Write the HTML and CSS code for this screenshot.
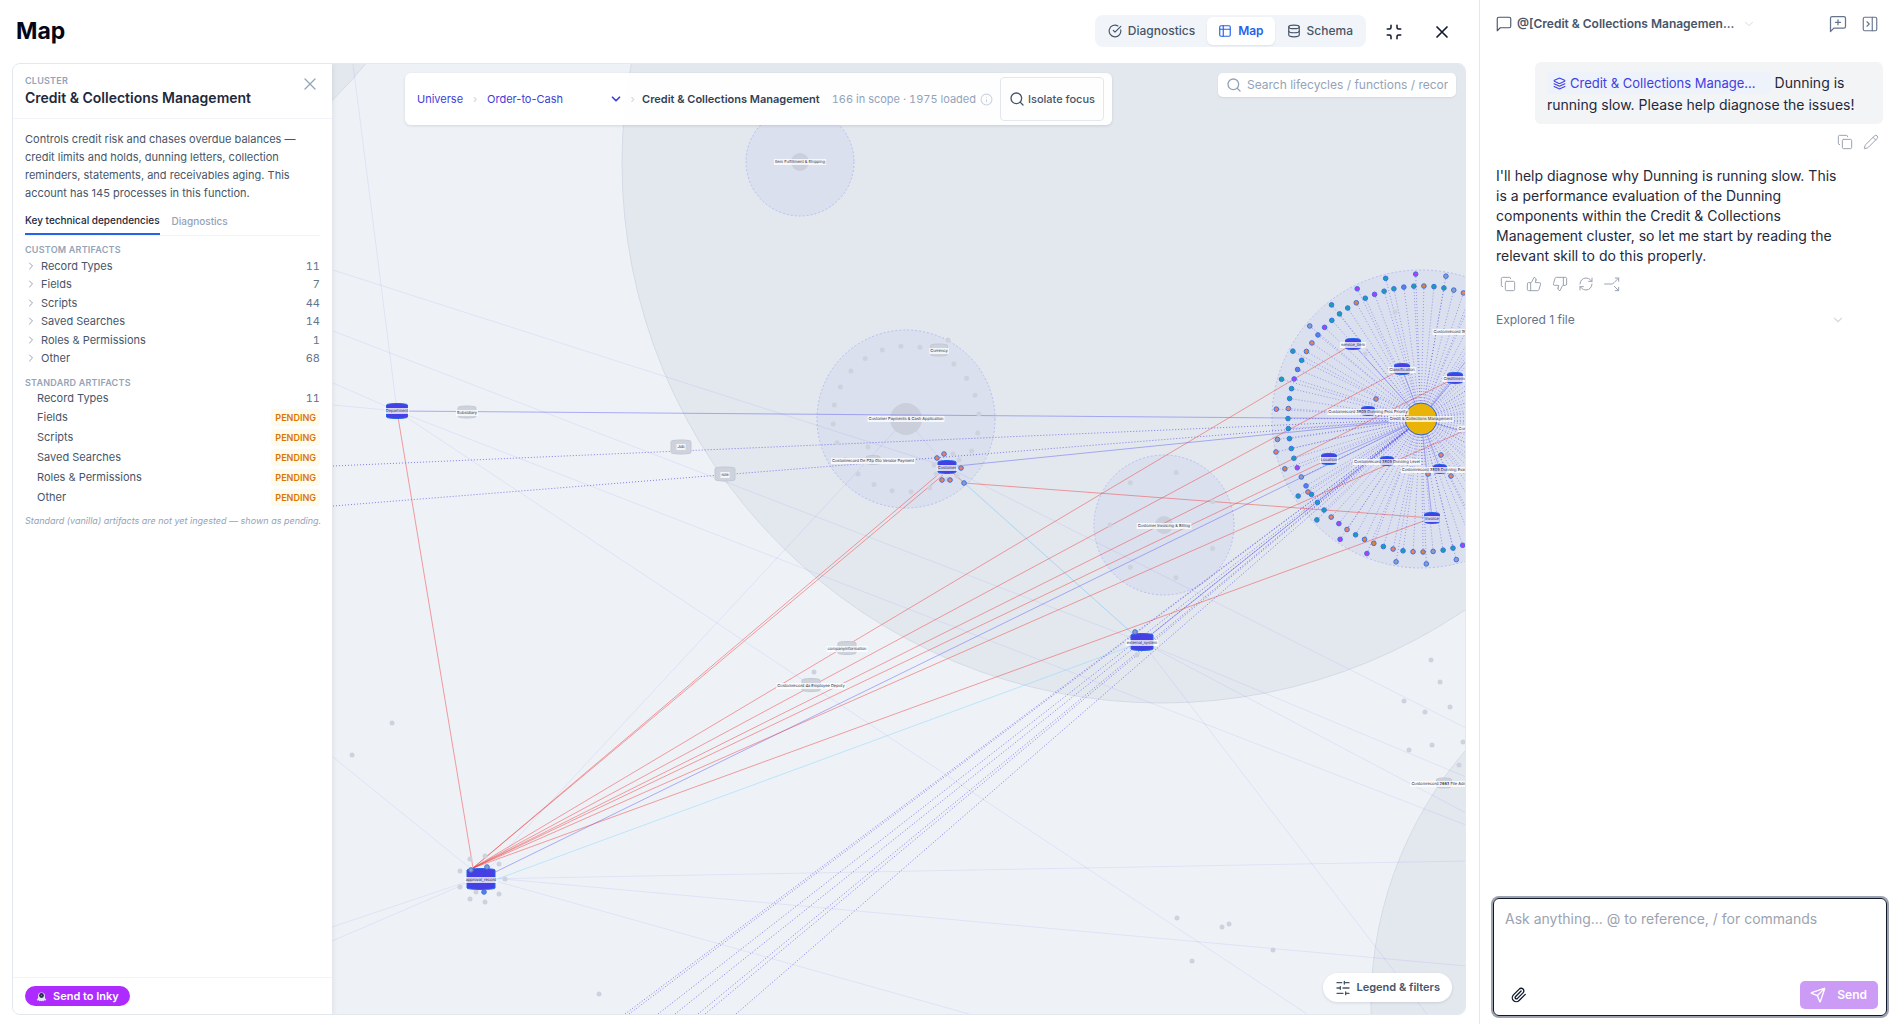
FILE: index.html
```html
<!DOCTYPE html>
<html lang="en">
<head>
<meta charset="utf-8">
<title>Map</title>
<link rel="stylesheet" href="styles.css">
</head>
<body>
<svg class="sprite" aria-hidden="true">
  <symbol id="i-check" viewBox="0 0 24 24"><path d="M21.8 10A10 10 0 1 1 17 3.3"/><path d="m9 11 3 3L22 4"/></symbol>
  <symbol id="i-table" viewBox="0 0 24 24"><rect x="3" y="3" width="18" height="18" rx="2"/><path d="M3 9h18M9 3v18"/></symbol>
  <symbol id="i-db" viewBox="0 0 24 24"><ellipse cx="12" cy="5" rx="9" ry="3"/><path d="M3 5v14a9 3 0 0 0 18 0V5"/><path d="M3 12a9 3 0 0 0 18 0"/></symbol>
  <symbol id="i-min" viewBox="0 0 24 24"><path d="M8 3v3a2 2 0 0 1-2 2H3M21 8h-3a2 2 0 0 1-2-2V3M3 16h3a2 2 0 0 1 2 2v3M16 21v-3a2 2 0 0 1 2-2h3"/></symbol>
  <symbol id="i-x" viewBox="0 0 24 24"><path d="M18 6 6 18M6 6l12 12"/></symbol>
  <symbol id="i-search" viewBox="0 0 24 24"><circle cx="11" cy="11" r="8"/><path d="m21 21-4.3-4.3"/></symbol>
  <symbol id="i-right" viewBox="0 0 24 24"><path d="m9 18 6-6-6-6"/></symbol>
  <symbol id="i-down" viewBox="0 0 24 24"><path d="m6 9 6 6 6-6"/></symbol>
  <symbol id="i-info" viewBox="0 0 24 24"><circle cx="12" cy="12" r="10"/><path d="M12 16v-4M12 8h.01"/></symbol>
  <symbol id="i-sliders" viewBox="0 0 24 24"><path d="M21 4h-7M10 4H3M21 12h-9M8 12H3M21 20h-5M12 20H3M14 2v4M8 10v4M16 18v4"/></symbol>
  <symbol id="i-msg" viewBox="0 0 24 24"><path d="M21 15a2 2 0 0 1-2 2H7l-4 4V5a2 2 0 0 1 2-2h14a2 2 0 0 1 2 2z"/></symbol>
  <symbol id="i-msgplus" viewBox="0 0 24 24"><path d="M21 15a2 2 0 0 1-2 2H7l-4 4V5a2 2 0 0 1 2-2h14a2 2 0 0 1 2 2z"/><path d="M12 7v6M9 10h6"/></symbol>
  <symbol id="i-panel" viewBox="0 0 24 24"><rect x="3" y="3" width="18" height="18" rx="2"/><path d="M15 3v18M8 9l3 3-3 3"/></symbol>
  <symbol id="i-layers" viewBox="0 0 24 24"><path d="m12.8 2.2a2 2 0 0 0-1.6 0L2.6 6.1a1 1 0 0 0 0 1.8l8.6 3.9a2 2 0 0 0 1.6 0l8.6-3.9a1 1 0 0 0 0-1.8Z"/><path d="m22 12.5-9.2 4.2a2 2 0 0 1-1.6 0L2 12.5"/><path d="m22 17.5-9.2 4.2a2 2 0 0 1-1.6 0L2 17.5"/></symbol>
  <symbol id="i-copy" viewBox="0 0 24 24"><rect x="8" y="8" width="14" height="14" rx="2"/><path d="M4 16a2 2 0 0 1-2-2V4a2 2 0 0 1 2-2h10a2 2 0 0 1 2 2"/></symbol>
  <symbol id="i-pencil" viewBox="0 0 24 24"><path d="M21.2 6.8a2.8 2.8 0 0 0-4-4L3.8 16.2a2 2 0 0 0-.5.8L2 21.4a.5.5 0 0 0 .6.6L7 20.7a2 2 0 0 0 .8-.5zM15 5l4 4"/></symbol>
  <symbol id="i-up" viewBox="0 0 24 24"><path d="M7 10v12M15 5.9 14 10h5.8a2 2 0 0 1 2 2.6l-2.4 8a2 2 0 0 1-1.9 1.4H4a2 2 0 0 1-2-2v-8a2 2 0 0 1 2-2h2.8a2 2 0 0 0 1.8-1.1L12 2a3.1 3.1 0 0 1 3 3.9Z"/></symbol>
  <symbol id="i-dn" viewBox="0 0 24 24"><path d="M17 14V2M9 18.1 10 14H4.2a2 2 0 0 1-2-2.6l2.4-8A2 2 0 0 1 6.5 2H20a2 2 0 0 1 2 2v8a2 2 0 0 1-2 2h-2.8a2 2 0 0 0-1.8 1.1L12 22a3.1 3.1 0 0 1-3-3.9Z"/></symbol>
  <symbol id="i-refresh" viewBox="0 0 24 24"><path d="M3 12a9 9 0 0 1 9-9 9.8 9.8 0 0 1 6.7 2.7L21 8M21 3v5h-5M21 12a9 9 0 0 1-9 9 9.8 9.8 0 0 1-6.7-2.7L3 16M8 16H3v5"/></symbol>
  <symbol id="i-split" viewBox="0 0 24 24"><path d="M17 3h5v5M22 3l-7 7a5 5 0 0 1-4 2H1M15.5 15.500 22 22M22 17v5h-5"/></symbol>
  <symbol id="i-clip" viewBox="0 0 24 24"><path d="m21.4 11.1-9.2 9.2a6 6 0 0 1-8.5-8.5l8.6-8.6A4 4 0 1 1 18 8.8l-8.6 8.6a2 2 0 0 1-2.8-2.8l8.5-8.5"/></symbol>
  <symbol id="i-send" viewBox="0 0 24 24"><path d="M14.5 21.7a.5.5 0 0 0 1 0l6.5-19a.5.5 0 0 0-.6-.6l-19 6.5a.5.5 0 0 0 0 1l7.9 3.1a2 2 0 0 1 1.1 1.1zM21.9 2.1 10.9 13.1"/></symbol>
</svg>

<div class="app">
  <main class="main">
    <header class="topbar">
      <h1>Map</h1>
      <nav class="views" aria-label="Views">
        <button type="button"><svg class="ic"><use href="#i-check"/></svg>Diagnostics</button>
        <button type="button" class="on"><svg class="ic"><use href="#i-table"/></svg>Map</button>
        <button type="button"><svg class="ic"><use href="#i-db"/></svg>Schema</button>
      </nav>
      <button type="button" class="tool" aria-label="Exit full screen"><svg class="ic big"><use href="#i-min"/></svg></button>
      <button type="button" class="tool" aria-label="Close"><svg class="ic huge"><use href="#i-x"/></svg></button>
    </header>

    <div class="workspace">
      <section class="panel">
        <header class="panel-head">
          <div>
            <p class="eyebrow">Cluster</p>
            <h2>Credit &amp; Collections Management</h2>
          </div>
          <button type="button" class="close" aria-label="Close panel"><svg class="ic huge"><use href="#i-x"/></svg></button>
        </header>
        <div class="panel-body">
          <p class="about">Controls credit risk and chases overdue balances — credit limits and holds, dunning letters, collection reminders, statements, and receivables aging. This account has 145 processes in this function.</p>
          <div class="tabs">
            <button type="button" class="on">Key technical dependencies</button>
            <button type="button">Diagnostics</button>
          </div>
          <h3>Custom artifacts</h3>
          <ul class="custom">
            <li><button type="button"><svg class="ic"><use href="#i-right"/></svg><span>Record Types</span><b>11</b></button></li>
            <li><button type="button"><svg class="ic"><use href="#i-right"/></svg><span>Fields</span><b>7</b></button></li>
            <li><button type="button"><svg class="ic"><use href="#i-right"/></svg><span>Scripts</span><b>44</b></button></li>
            <li><button type="button"><svg class="ic"><use href="#i-right"/></svg><span>Saved Searches</span><b>14</b></button></li>
            <li><button type="button"><svg class="ic"><use href="#i-right"/></svg><span>Roles &amp; Permissions</span><b>1</b></button></li>
            <li><button type="button"><svg class="ic"><use href="#i-right"/></svg><span>Other</span><b>68</b></button></li>
          </ul>
          <h3>Standard artifacts</h3>
          <ul class="standard">
            <li><span>Record Types</span><b>11</b></li>
            <li><span>Fields</span><em>Pending</em></li>
            <li><span>Scripts</span><em>Pending</em></li>
            <li><span>Saved Searches</span><em>Pending</em></li>
            <li><span>Roles &amp; Permissions</span><em>Pending</em></li>
            <li><span>Other</span><em>Pending</em></li>
          </ul>
          <p class="note">Standard (vanilla) artifacts are not yet ingested — shown as pending.</p>
        </div>
        <footer class="panel-foot">
          <button type="button" class="inky"><svg viewBox="0 0 16 16" aria-hidden="true"><path d="M3 7a5 5 0 0 1 10 0v3l2 3-2 1-1-1-1 2-2-1-1 1-1-1-2 1-1-2-1 1-2-1 2-3z" fill="#e2e6ee"/><circle cx="8" cy="6.500" r="3.500" fill="#1f2a44"/><circle cx="8" cy="6.500" r="1.200" fill="#5f8aa0"/></svg>Send to Inky</button>
        </footer>
      </section>

      <section class="canvas" aria-label="Dependency map">
        <svg id="graph" viewBox="332 64 1133 950" preserveAspectRatio="xMinYMin slice"></svg>
        <div class="overlay">
          <div class="crumbs">
            <a href="#">Universe</a><i>›</i>
            <span class="pick"><select aria-label="Lifecycle"><option>Order-to-Cash</option></select><svg class="ic"><use href="#i-down"/></svg></span><i>›</i>
            <strong>Credit &amp; Collections Management</strong>
            <span class="scope">166 in scope · 1975 loaded<svg class="ic"><use href="#i-info"/></svg></span>
            <button type="button"><svg class="ic"><use href="#i-search"/></svg>Isolate focus</button>
          </div>
          <label class="find"><svg class="ic"><use href="#i-search"/></svg><input type="text" aria-label="Search the map" placeholder="Search lifecycles / functions / records"></label>
        </div>
        <button type="button" class="legend"><svg class="ic"><use href="#i-sliders"/></svg>Legend &amp; filters</button>
      </section>
    </div>
  </main>

  <aside class="chat">
    <header class="chat-head">
      <button type="button" class="thread"><svg class="ic"><use href="#i-msg"/></svg><span>@[Credit &amp; Collections Managemen...</span><svg class="ic chev"><use href="#i-down"/></svg></button>
      <button type="button" aria-label="New chat"><svg class="ic huge"><use href="#i-msgplus"/></svg></button>
      <button type="button" aria-label="Collapse chat"><svg class="ic"><use href="#i-panel"/></svg></button>
    </header>
    <div class="log">
      <div class="bubble"><span class="chip"><svg class="ic"><use href="#i-layers"/></svg>Credit &amp; Collections Manage...</span> Dunning is running slow. Please help diagnose the issues!</div>
      <div class="acts mine">
        <button type="button" aria-label="Copy"><svg class="ic"><use href="#i-copy"/></svg></button>
        <button type="button" aria-label="Edit"><svg class="ic"><use href="#i-pencil"/></svg></button>
      </div>
      <p class="reply">I'll help diagnose why Dunning is running slow. This is a performance evaluation of the Dunning components within the Credit &amp; Collections Management cluster, so let me start by reading the relevant skill to do this properly.</p>
      <div class="acts">
        <button type="button" aria-label="Copy"><svg class="ic"><use href="#i-copy"/></svg></button>
        <button type="button" aria-label="Good reply"><svg class="ic"><use href="#i-up"/></svg></button>
        <button type="button" aria-label="Bad reply"><svg class="ic"><use href="#i-dn"/></svg></button>
        <button type="button" aria-label="Retry"><svg class="ic"><use href="#i-refresh"/></svg></button>
        <button type="button" aria-label="Branch"><svg class="ic"><use href="#i-split"/></svg></button>
      </div>
      <button type="button" class="step"><span>Explored 1 file</span><svg class="ic"><use href="#i-down"/></svg></button>
    </div>
    <form class="composer">
      <textarea aria-label="Message" placeholder="Ask anything... @ to reference, / for commands"></textarea>
      <div class="composer-bar">
        <button type="button" class="clip" aria-label="Attach"><svg class="ic"><use href="#i-clip"/></svg></button>
        <button type="button" class="send"><svg class="ic"><use href="#i-send"/></svg>Send</button>
      </div>
    </form>
  </aside>
</div>
<script src="graph.js"></script>
</body>
</html>
```
FILE: styles.css
```css
* { box-sizing: border-box; margin: 0; padding: 0; }
body { font-family: Inter, "Liberation Sans", sans-serif; font-size: 11px; line-height: 1.5; color: #475569; background: #fff; }
button, input, select, textarea { font: inherit; color: inherit; background: none; border: 0; }
button { cursor: pointer; }
ul { list-style: none; }
.sprite { position: absolute; width: 0; height: 0; }
.ic { width: 16px; height: 16px; flex: none; fill: none; stroke: currentColor; stroke-width: 2; stroke-linecap: round; stroke-linejoin: round; }
.ic.big { width: 18px; height: 18px; }
.ic.huge { width: 20px; height: 20px; }

.app { display: flex; height: 100vh; }
.main { flex: 1; min-width: 0; display: flex; flex-direction: column; padding: 0 13px 9px 12px; }
.topbar { display: flex; align-items: center; height: 63px; padding: 0 8px 0 4px; }
h1 { flex: 1; font-size: 23px; line-height: 32px; font-weight: 700; color: #020617; padding-bottom: 2px; }
.views { display: flex; gap: 1px; background: #f1f5f9; border-radius: 8px; padding: 2px; height: 32px; margin: 0 12px 2px 0; }
.views button { display: flex; align-items: center; gap: 6px; padding: 0 11px; font-size: 12px; font-weight: 500; border-radius: 6px; }
.views .ic { width: 14px; height: 14px; }
.views .on { background: #fff; color: #2563eb; font-weight: 600; box-shadow: 0 1px 2px #0f172a14; }
.tool { width: 32px; height: 32px; display: grid; place-items: center; color: #0f172a; }
.tool + .tool { margin-left: 16px; }

.workspace { flex: 1; min-height: 0; display: flex; border: 1px solid #e2e8f0; border-radius: 8px; overflow: hidden; }
.panel { width: 319px; flex: none; display: flex; flex-direction: column; background: #fff; position: relative; box-shadow: 0 0 6px #0f172a1a; z-index: 1; }
.panel-head { display: flex; justify-content: space-between; height: 55px; padding: 10px 12px 0; border-bottom: 1px solid #f1f5f9; }
.eyebrow, h3 { font-size: 9px; line-height: 14px; font-weight: 600; text-transform: uppercase; color: #94a3b8; letter-spacing: 0.025em; }
h2 { font-size: 14px; line-height: 20px; font-weight: 600; color: #1e293b; }
.close { width: 20px; height: 20px; display: grid; place-items: center; color: #94a3b8; }
.close .ic { stroke-width: 1.5; }
.panel-body { flex: 1; padding: 12px 12px 0; }
.about { line-height: 1.625; }
.tabs { display: flex; gap: 12px; margin: 8px 0 7px; border-bottom: 1px solid #f1f5f9; }
.tabs button { height: 24px; padding-bottom: 2px; font-size: 10px; font-weight: 500; color: #94a3b8; }
.tabs .on { color: #1e293b; border-bottom: 2px solid #2563eb; margin-bottom: -1px; }
.custom button { display: flex; align-items: center; width: 100%; padding: 1px 0; text-align: left; }
.custom .ic { width: 12px; height: 12px; margin-right: 4px; color: #94a3b8; }
.panel li span { flex: 1; }
.panel li b { font-weight: 400; color: #64748b; font-variant-numeric: tabular-nums; }
.custom + h3 { margin-top: 8px; }
.standard li { display: flex; align-items: center; height: 20px; padding-left: 12px; }
.standard li:first-child { height: 18px; }
.standard em { font-style: normal; font-size: 9px; line-height: 17px; font-weight: 600; text-transform: uppercase; color: #d97706; background: #fffbeb; border-radius: 4px; padding: 0 4px; }
.note { margin-top: 6px; font-size: 9px; line-height: 14px; font-style: italic; color: #94a3b8; white-space: nowrap; }
.panel-foot { border-top: 1px solid #f1f5f9; padding: 8px 12px; }
.inky { display: flex; align-items: center; gap: 6px; height: 20px; padding: 0 11px; border-radius: 10px; background: #ad2bff; color: #fff; font-weight: 600; }
.inky svg { width: 11px; height: 11px; }

.canvas { flex: 1; min-width: 0; position: relative; background: #eef2f7; }
#graph { position: absolute; inset: 0; width: 100%; height: 100%; }
.overlay { position: absolute; inset: 9px 9px auto 73px; display: flex; justify-content: space-between; align-items: flex-start; }
.crumbs { display: flex; align-items: center; height: 52px; padding: 0 8px 0 12px; background: #fffffff2; border-radius: 6px; box-shadow: 0 1px 3px #0f172a1f; white-space: nowrap; }
.crumbs a { text-decoration: none; color: #4040d8; }
.crumbs i { font-style: normal; color: #cbd5e1; width: 24px; text-align: center; }
.pick { position: relative; display: flex; align-items: center; color: #4040d8; }
.pick select { appearance: none; width: 136px; }
.pick .ic { position: absolute; right: 0; width: 14px; height: 14px; stroke-width: 3; pointer-events: none; }
.crumbs .pick + i { width: 19px; }
.crumbs strong { font-weight: 600; color: #334155; }
.scope { display: flex; align-items: center; gap: 4px; margin: 0 7px 0 12px; color: #94a3b8; font-variant-numeric: tabular-nums; }
.scope .ic { width: 13px; height: 13px; color: #cbd5e1; }
.crumbs button { display: flex; align-items: center; gap: 3px; height: 44px; padding: 0 8px; border: 1px solid #e2e8f0; border-radius: 4px; font-weight: 500; }
.find { display: flex; align-items: center; gap: 5px; width: 238px; height: 24px; padding: 0 8px; background: #fff; border-radius: 5px; box-shadow: 0 1px 2px #0f172a14; color: #94a3b8; }
.find input { flex: 1; min-width: 0; font-size: 12px; outline: 0; }
.find input::placeholder { color: #94a3b8; }
.legend { position: absolute; right: 13px; bottom: 12px; display: flex; align-items: center; gap: 6px; height: 29px; padding: 0 12px; border-radius: 15px; background: #fff; box-shadow: 0 1px 3px #0f172a1f; font-weight: 600; }

.region { fill: #e3e8ef; stroke: #d5dbe6; }
.cluster { fill: #6366f10f; stroke: #b9bdf0; stroke-dasharray: 2 2; stroke-width: 1; }
.hub { fill: #cbcfdc; }
.hub.focus { fill: #eab308; stroke: #2563eb; }
.e { fill: none; stroke-width: 1; }
.e.faint { stroke: #6366f11c; }
.e.blue { stroke: #6366f180; }
.e.dot { stroke: #4f46e5b0; stroke-dasharray: 1 2; }
.e.ray { stroke: #4f46e57a; stroke-dasharray: 1 2; }
.e.red { stroke: #ef444480; }
.e.cyan { stroke: #7dd3fc70; }
.speck { fill: #cdd2dd; }
.node { fill: #4640e4; stroke: #2563eb; }
.node.off { fill: #cdd2dd; stroke: #c3c8d4; }
.tag { fill: #ffffffc4; }
.lbl { font-size: 4px; fill: #1e293b; text-anchor: middle; text-rendering: geometricPrecision; }

.chat { width: 417px; flex: none; display: flex; flex-direction: column; border-left: 1px solid #e5e7eb; padding: 0 9px 8px 13px; }
.chat-head { display: flex; align-items: center; gap: 13px; height: 48px; padding: 0 8px 0 3px; color: #64748b; }
.chat-head button { display: flex; align-items: center; }
.chat-head button > .ic { stroke-width: 1.5; }
.chat-head button > .ic:not(.huge) { width: 18px; height: 18px; }
.chat-head .thread { flex: 1; gap: 4px; margin-left: -1px; font-size: 12px; font-weight: 600; color: #475569; }
.chat-head .thread > .chev:not(.huge) { width: 14px; height: 14px; margin-left: 4px; color: #cbd5e1; }
.log { flex: 1; padding: 14px 4px 0 3px; font-size: 14px; line-height: 20px; color: #1e293b; }
.bubble { margin-left: 39px; padding: 10px 12px 8px; line-height: 22px; background: #f3f4f6; border-radius: 6px; }
.chip { display: inline-flex; align-items: center; gap: 4px; height: 22px; padding: 0 15px 0 6px; background: #eef2fb; border-radius: 4px; font-size: 13px; font-weight: 400; color: #4040e0; vertical-align: top; }
.chip .ic { width: 13px; height: 13px; }
.acts { display: flex; gap: 10px; padding-left: 4px; color: #9ca3af; }
.acts .ic { stroke-width: 1.5; }
.acts button { display: grid; }
.acts.mine { justify-content: flex-end; padding: 10px 4px 16px; }
.reply { margin: 0 38px 10px 0; }
.step { display: flex; justify-content: space-between; align-items: center; width: 100%; padding-right: 38px; margin-top: 18px; font-size: 12px; line-height: 20px; color: #64748b; }
.step .ic { width: 14px; height: 14px; color: #d5dbe3; }
.composer { display: flex; flex-direction: column; height: 118px; border: 1px solid #0f172a; border-radius: 6px; box-shadow: 0 0 0 2px #9ca3af; padding: 10px 8px 6px 11px; }
.composer textarea { flex: 1; font-size: 14px; line-height: 20px; resize: none; outline: 0; }
.composer textarea::placeholder { color: #9ca3af; }
.composer-bar { display: flex; justify-content: space-between; align-items: center; }
.clip { display: grid; margin-left: 6px; color: #0f172a; }
.send { display: flex; align-items: center; gap: 11px; height: 28px; padding: 0 11px 0 10px; background: #cb9bf5; color: #fff; border-radius: 5px; font-size: 12px; font-weight: 600; }
```
FILE: graph.js
```js
const NS = 'http://www.w3.org/2000/svg';
const graph = document.getElementById('graph');
const add = (name, attrs, text) => {
  const el = document.createElementNS(NS, name);
  for (const k in attrs) el.setAttribute(k, attrs[k]);
  if (text) el.textContent = text;
  graph.appendChild(el);
  return el;
};
const circle = (cx, cy, r, cls) => add('circle', { cx, cy, r, class: cls });
const line = (cls, x1, y1, x2, y2) => add('line', { x1, y1, x2, y2, class: 'e ' + cls });
const polar = (cx, cy, r, deg) => [cx + r * Math.sin(deg * Math.PI / 180), cy - r * Math.cos(deg * Math.PI / 180)];

const HUB = [1421, 419], APPROVAL = [473, 868], DEPT = [397, 411], CUSTOMER = [947, 467], EXT = [1142, 642];

// lifecycle regions and function clusters
[[1162, 163, 540], [-48, -283, 540], [1761, 1005, 390]].forEach(c => circle(...c, 'region'));
[[800, 162, 54], [906, 419, 89], [1164, 525, 70], [...HUB, 149]].forEach(c => circle(...c, 'cluster'));

// background relations
[
  [353, 64, ...DEPT], [333, 270, ...CUSTOMER], [333, 331, ...EXT], [333, 383, ...DEPT], [333, 405, ...DEPT],
  [...DEPT, 1307, 1014], [...DEPT, 1466, 825], [...EXT, 1466, 777], [...EXT, 1466, 813], [...EXT, 1427, 1014],
  [...CUSTOMER, 1466, 728], [...CUSTOMER, ...EXT], [906, 419, 481, 877], [906, 419, ...CUSTOMER],
  [481, 879, 1466, 861], [481, 877, 1466, 966], [481, 877, 969, 1014], [481, 877, 332, 927], [481, 877, 332, 941], [481, 877, 333, 757]
].forEach(l => line('faint', ...l));

[[906, 419, 16], [800, 162, 9], [1164, 525, 9]].forEach(c => circle(...c, 'hub'));

line('cyan', 964, 483, ...EXT);
line('cyan', 481, 885, ...EXT);
[DEPT, CUSTOMER, [481, 879], EXT, [1353, 344], [1402, 369], [1455, 378], [1329, 459], [1432, 518], [1490, 330], [1490, 440], [1440, 469]]
  .forEach(p => line('blue', ...p, ...HUB));
[[333, 466], [333, 506], [625, 1014], [629, 1014], [658, 1014], [675, 1014], [698, 1014], [705, 1014], [736, 1014]]
  .forEach(p => line('dot', ...p, ...HUB));
[DEPT, [940, 473], [943, 475], [1353, 344], [1402, 369], [1455, 378], [1329, 459], [1466, 430], [1432, 518]]
  .forEach(p => line('red', ...APPROVAL, ...p));
line('red', 953, 473, 964, 483);
line('red', 964, 483, 1432, 518);

// artifact rings around the focused cluster, counter-clockwise
const COLORS = { t: '#14a3ad', p: '#b43cf5', o: '#e5822a', s: '#f0805a', g: '#8f9dbd', b: '#5b7fe8' };
const dots = [];
const ring = (r, start, step, codes) => [...codes].forEach((c, i) => dots.push([...polar(...HUB, r, start - i * step), c]));
ring(133, 18.6, 4.337, 'sgttotbttptotttpbsotbpttstttttpgbtttspstootstsogttp');
ring(145, 9.9, 12, 'gptptgttsgottppggg');
dots.push([1276, 452, 's'], [1308, 492, 's']);
dots.forEach(d => line('ray', d[0], d[1], ...HUB));
for (let i = 1; i < 33; i++) line('ray', ...polar(...HUB, 133, 18.6 + i * 4.337), ...HUB);
for (let i = 1; i < 13; i++) line('ray', ...polar(...HUB, 145, 9.9 + i * 12), ...HUB);
dots.push([1376, 399, 's'], [1441, 455, 's'], [1428, 474, 's'], [1451, 476, 's'],
  [944, 454, 's'], [937, 458, 's'], [961, 468, 's'], [942, 480, 's'], [950, 480, 's'], [964, 483, 'g']);

// unrelated artifacts
const specks = [
  [470, 859], [485, 856], [499, 864], [505, 879], [499, 894], [485, 902], [470, 899], [460, 887], [460, 871], [476, 892], [599, 994],
  [814, 672], [1431, 660], [1440, 682], [1404, 701], [1450, 707], [1425, 712], [1432, 745], [1409, 750], [1463, 742], [1459, 765],
  [1177, 918], [1222, 927], [1229, 924], [1273, 950], [1192, 961], [1137, 655], [392, 723], [352, 755], [948, 340], [868, 447],
  [953, 454], [959, 460], [934, 465], [936, 474], [957, 476], [1395, 312], [1365, 354], [1447, 455]
];
for (let i = 0; i < 24; i++) specks.push(polar(906, 419, 73, i * 15 - 4));
for (let i = 0; i < 7; i++) specks.push(polar(1164, 525, 54, 13 + i * 51.4));
specks.forEach(p => circle(...p, 2.5, 'speck'));

circle(...HUB, 16, 'hub focus');

const cyl = (x, y, w, h, cls) => add('path', {
  class: 'node ' + (cls || ''),
  d: `M${x - w / 2} ${y - h / 2 + 1.5}a${w / 2} 1.5 0 0 1 ${w} 0v${h - 3}a${w / 2} 1.5 0 0 1 ${-w} 0z`
});
[[397, 411, 21, 15], [947, 467, 18, 13], [481, 879, 28, 21], [1142, 642, 22, 17], [1353, 344, 15, 11], [1402, 369, 15, 11],
 [1455, 378, 15, 11], [1329, 459, 15, 11], [1432, 518, 15, 11], [1368, 411, 13, 9], [1387, 461, 13, 9], [1440, 469, 13, 9]]
  .forEach(n => cyl(...n));
[[467, 412, 18, 12], [681, 447, 20, 14], [725, 474, 20, 14], [847, 648, 18, 13], [811, 685, 18, 13], [939, 350, 17, 12], [873, 460, 14, 9], [1444, 783, 15, 10]]
  .forEach(n => cyl(...n, 'off'));

dots.push([1135, 632, 'g'], [471, 870, 'g'], [487, 867, 'g'], [484, 892, 'b']);
dots.forEach(([cx, cy, c]) => add('circle', { cx, cy, r: 2.3, fill: COLORS[c], stroke: '#3b6fe8' }));

[
  [800, 161, 'Item Fulfillment & Shipping'], [939, 350, 'Currency'], [906, 418, 'Customer Payments & Cash Application'],
  [873, 460, 'Customrecord De P2p Gto Vendor Payment'], [947, 467, 'Customer'], [1164, 525, 'Customer Invoicing & Billing'],
  [397, 410, 'Department'], [467, 412, 'Subsidiary'], [681, 446, 'Job'], [725, 474, 'role'], [847, 648, 'companyinformation'],
  [811, 685, 'Customrecord 4a Employee Deputy'], [1142, 642, 'external_system'], [1447, 783, 'Customrecord 2663 File Admin Fields'],
  [1353, 344, 'service_item'], [1402, 369, 'Classification'], [1467, 331, 'Customrecord 3805 Dunning Letter'], [1455, 378, 'Creditmemo'],
  [1368, 411, 'Customrecord 3805 Dunning Proc Priority'], [1387, 461, 'Customrecord 3805 Dunning Level'], [1329, 459, 'Location'],
  [1440, 469, 'Customrecord 3805 Dunning Eval Result'], [1486, 428, 'Customrecord 3805 Dunning'], [1432, 518, 'Invoice'],
  [1421, 418, 'Credit & Collections Management'], [481, 879, 'approval_record']
].forEach(([x, y, t]) => {
  const text = add('text', { x, y: y + 2, class: 'lbl' }, t);
  const w = text.getComputedTextLength() + 2;
  graph.insertBefore(add('rect', { x: x - w / 2, y: y - 2, width: w, height: 6, class: 'tag' }), text);
});
```
